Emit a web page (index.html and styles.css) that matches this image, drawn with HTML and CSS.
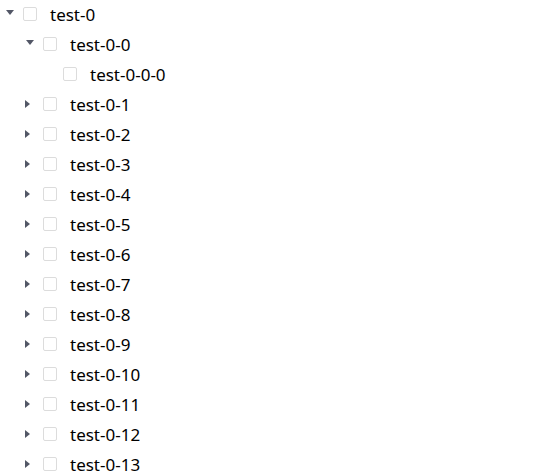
FILE: index.html
```html
<!DOCTYPE html>
<html>
<head>
<meta charset="utf-8">
<link rel="stylesheet" href="styles.css">
</head>
<body>
<ul class="tree">
  <li class="node open lvl0"><span class="switcher"><i class="caret-down"></i></span><span class="checkbox"></span><span class="title">test-0</span></li>
  <li class="node open lvl1"><span class="switcher"><i class="caret-down"></i></span><span class="checkbox"></span><span class="title">test-0-0</span></li>
  <li class="node leaf lvl2"><span class="switcher"></span><span class="checkbox"></span><span class="title">test-0-0-0</span></li>
  <li class="node lvl1"><span class="switcher"><i class="caret-right"></i></span><span class="checkbox"></span><span class="title">test-0-1</span></li>
  <li class="node lvl1"><span class="switcher"><i class="caret-right"></i></span><span class="checkbox"></span><span class="title">test-0-2</span></li>
  <li class="node lvl1"><span class="switcher"><i class="caret-right"></i></span><span class="checkbox"></span><span class="title">test-0-3</span></li>
  <li class="node lvl1"><span class="switcher"><i class="caret-right"></i></span><span class="checkbox"></span><span class="title">test-0-4</span></li>
  <li class="node lvl1"><span class="switcher"><i class="caret-right"></i></span><span class="checkbox"></span><span class="title">test-0-5</span></li>
  <li class="node lvl1"><span class="switcher"><i class="caret-right"></i></span><span class="checkbox"></span><span class="title">test-0-6</span></li>
  <li class="node lvl1"><span class="switcher"><i class="caret-right"></i></span><span class="checkbox"></span><span class="title">test-0-7</span></li>
  <li class="node lvl1"><span class="switcher"><i class="caret-right"></i></span><span class="checkbox"></span><span class="title">test-0-8</span></li>
  <li class="node lvl1"><span class="switcher"><i class="caret-right"></i></span><span class="checkbox"></span><span class="title">test-0-9</span></li>
  <li class="node lvl1"><span class="switcher"><i class="caret-right"></i></span><span class="checkbox"></span><span class="title">test-0-10</span></li>
  <li class="node lvl1"><span class="switcher"><i class="caret-right"></i></span><span class="checkbox"></span><span class="title">test-0-11</span></li>
  <li class="node lvl1"><span class="switcher"><i class="caret-right"></i></span><span class="checkbox"></span><span class="title">test-0-12</span></li>
  <li class="node lvl1"><span class="switcher"><i class="caret-right"></i></span><span class="checkbox"></span><span class="title">test-0-13</span></li>
</ul>
</body>
</html>
```
FILE: styles.css
```css
html, body {
  margin: 0;
  padding: 0;
  background: #ffffff;
}
body {
  font-family: "Noto Sans", "Open Sans", sans-serif;
  font-size: 17px;
  color: #000000;
}
.tree {
  list-style: none;
  margin: 0;
  padding: 0;
}
.node {
  display: flex;
  align-items: center;
  height: 30px;
}
.lvl1 { padding-left: 20px; }
.lvl2 { padding-left: 40px; }
.switcher {
  width: 20px;
  height: 30px;
  display: flex;
  align-items: center;
  justify-content: center;
  flex-shrink: 0;
}
.caret-down {
  display: block;
  width: 0;
  height: 0;
  border-left: 4px solid transparent;
  border-right: 4px solid transparent;
  border-top: 5px solid #525766;
  margin-top: -6px;
}
.caret-right {
  display: block;
  width: 0;
  height: 0;
  border-top: 4.5px solid transparent;
  border-bottom: 4.5px solid transparent;
  border-left: 5px solid #525766;
  margin-left: -5px;
  margin-top: -2px;
}
.checkbox {
  box-sizing: border-box;
  width: 14px;
  height: 14px;
  border: 1px solid #dcdcdc;
  border-radius: 2px;
  background: #ffffff;
  margin-left: 3px;
  margin-top: -2px;
  flex-shrink: 0;
}
.title {
  margin-left: 13px;
  line-height: 30px;
  white-space: nowrap;
}
```
